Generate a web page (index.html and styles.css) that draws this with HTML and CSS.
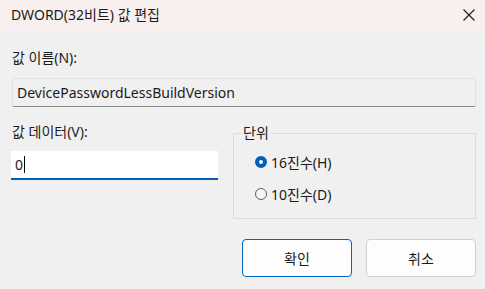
FILE: index.html
```html
<!DOCTYPE html>
<html lang="ko">
<head>
  <meta charset="UTF-8" />
  <title>DWORD(32비트) 값 편집</title>
  <link rel="stylesheet" href="styles.css">
</head>
<body>
  <div class="dialog">
    <div class="titlebar">
      <span class="title">DWORD(32비트) 값 편집</span>
      <svg class="close" width="14" height="14" viewBox="0 0 14 14">
        <path d="M1.5 1.5 L12.5 12.5 M12.5 1.5 L1.5 12.5" stroke="#1a1a1a" stroke-width="1.1" fill="none"/>
      </svg>
    </div>

    <div class="content">
      <div class="label name-label">값 이름(N):</div>
      <div class="field readonly">DevicePasswordLessBuildVersion</div>

      <div class="row">
        <div class="col-left">
          <div class="label">값 데이터(V):</div>
          <div class="field edit"><span>0</span><span class="caret"></span></div>
        </div>

        <fieldset class="group">
          <legend>단위</legend>
          <div class="radio">
            <span class="dot checked"></span>
            <span>16진수(H)</span>
          </div>
          <div class="radio">
            <span class="dot"></span>
            <span>10진수(D)</span>
          </div>
        </fieldset>
      </div>

      <div class="buttons">
        <button class="btn primary">확인</button>
        <button class="btn">취소</button>
      </div>
    </div>
  </div>
</body>
</html>
```

FILE: styles.css
```css
body {
  margin: 0;
  font-family: "Noto Sans", "Noto Sans CJK KR", sans-serif;
  font-size: 14px;
  color: #1b1b1b;
  background: #f0f0f0;
}

.dialog {
  width: 485px;
  height: 289px;
  background: #f0f0f0;
}

/* Заголовок вікна */
.titlebar {
  height: 34px;
  background: #f8f0ef;
  display: flex;
  align-items: center;
  justify-content: space-between;
  padding: 0 9px 0 11px;
  box-sizing: border-box;
}
.title {
  font-size: 14px;
  line-height: 20px;
  margin-top: -4px;
}
.close {
  margin-top: -4px;
}

.content {
  padding: 14px 9px 0 12px;
}

.label {
  line-height: 20px;
  height: 20px;
}
.name-label {
  margin-bottom: 10px;
}

.field {
  height: 29px;
  box-sizing: border-box;
  padding: 0 4px;
  display: flex;
  align-items: center;
  line-height: 20px;
}
.field.readonly {
  background: #f0f0f0;
  border: 1px solid #e3e3e3;
  border-bottom-color: #8c8c8c;
  border-radius: 2px;
}
.field.edit {
  background: #ffffff;
  border-bottom: 2px solid #005fb8;
  margin-top: 9px;
  margin-left: -1px;
  width: 207px;
}
.caret {
  width: 1px;
  height: 17px;
  background: #000;
  margin-left: 1px;
}

.row {
  display: flex;
  justify-content: space-between;
  margin-top: 15px;
}

.group {
  width: 243px;
  height: 94px;
  box-sizing: border-box;
  margin: 0;
  margin-top: 3px;
  border: 1px solid #dcdcdc;
  padding: 11px 0 0 22px;
}
.group legend {
  padding: 0 2px;
  margin-left: -15px;
  line-height: 16px;
}

.radio {
  display: flex;
  align-items: center;
  height: 20px;
  gap: 4px;
  margin-bottom: 12px;
  margin-left: -1px;
}
.dot {
  width: 12px;
  height: 12px;
  box-sizing: border-box;
  border-radius: 50%;
  border: 1px solid #5f5f5f;
  background: #f6f6f6;
}
.dot.checked {
  border: 4px solid #005fb8;
  background: #ffffff;
}

.buttons {
  display: flex;
  justify-content: flex-end;
  gap: 14px;
  margin-top: 20px;
}
.btn {
  width: 110px;
  height: 38px;
  font-family: inherit;
  font-size: 14px;
  color: #1b1b1b;
  background: #fdfdfd;
  border: 1px solid #d0d0d0;
  border-radius: 4px;
}
.btn.primary {
  border-color: #0067c0;
}
```
